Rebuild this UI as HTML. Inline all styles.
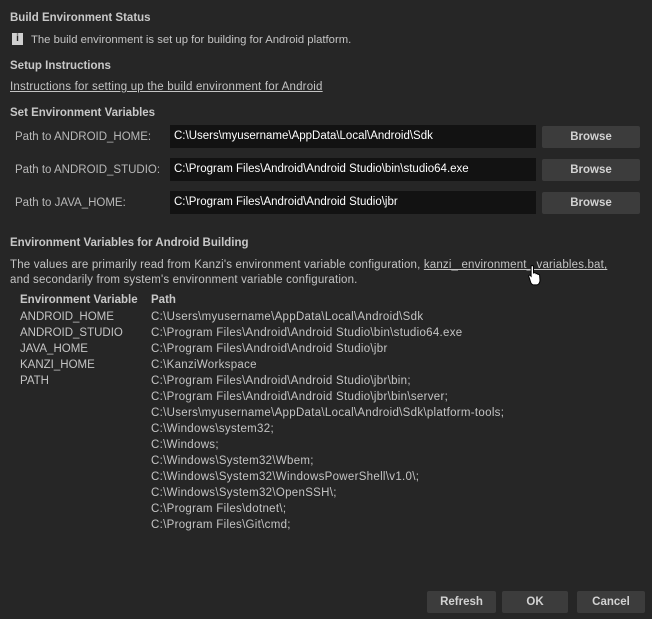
<!DOCTYPE html>
<html><head><meta charset="utf-8"><style>
body{margin:0;width:652px;height:619px;background:#262626;font-family:"Liberation Sans",sans-serif;font-size:11.5px;color:#c4c4c4;position:relative;overflow:hidden}
.a{position:absolute;white-space:nowrap;line-height:14px}
.h{font-weight:bold;color:#c8c8c8}
.u{text-decoration:underline}
.in{position:absolute;left:170px;width:366px;height:23px;background:#121212;color:#fff;line-height:22px;padding-left:4px;box-sizing:border-box;white-space:nowrap}
.b{position:absolute;background:#3c3c3c;color:#d2d2d2;font-weight:bold;text-align:center;border-radius:2px;line-height:22px;height:22px}
.lab{position:absolute;left:15px;color:#b8b8b8;line-height:14px}
</style></head><body>
<div class="a h" style="left:10px;top:11px">Build Environment Status</div>
<div class="a" style="left:12px;top:33px;width:11px;height:12px;background:#d0d0d0;color:#262626;font-weight:bold;text-align:center;line-height:12px;font-size:10px">i</div>
<div class="a" style="left:31px;top:33px;font-size:11.3px">The build environment is set up for building for Android platform.</div>
<div class="a h" style="left:10px;top:59px">Setup Instructions</div>
<div class="a u" style="left:10px;top:80px;letter-spacing:0.2px">Instructions for setting up the build environment for Android</div>
<div class="a h" style="left:10px;top:106px">Set Environment Variables</div>
<div class="lab" style="top:130px">Path to ANDROID_HOME:</div>
<div class="in" style="top:125px">C:\Users\myusername\AppData\Local\Android\Sdk</div>
<div class="b" style="left:542px;top:126px;width:98px">Browse</div>
<div class="lab" style="top:163px">Path to ANDROID_STUDIO:</div>
<div class="in" style="top:158px">C:\Program Files\Android\Android Studio\bin\studio64.exe</div>
<div class="b" style="left:542px;top:159px;width:98px">Browse</div>
<div class="lab" style="top:196px">Path to JAVA_HOME:</div>
<div class="in" style="top:191px">C:\Program Files\Android\Android Studio\jbr</div>
<div class="b" style="left:542px;top:192px;width:98px">Browse</div>
<div class="a h" style="left:10px;top:236px">Environment Variables for Android Building</div>
<div class="a" style="left:10px;top:258px;letter-spacing:0.17px">The values are primarily read from Kanzi's environment variable configuration, <span class="u">kanzi_ environment_ variables.bat,</span></div>
<div class="a" style="left:10px;top:273px;letter-spacing:0.17px">and secondarily from system's environment variable configuration.</div>
<div class="a h" style="left:20px;top:293px;font-weight:bold">Environment Variable</div>
<div class="a h" style="left:151px;top:293px">Path</div>
<div class="a" style="left:20px;top:309px;line-height:16px">ANDROID_HOME<br>ANDROID_STUDIO<br>JAVA_HOME<br>KANZI_HOME<br>PATH</div>
<div class="a" style="left:151px;top:309px;line-height:16px;letter-spacing:0.3px">C:\Users\myusername\AppData\Local\Android\Sdk<br>C:\Program Files\Android\Android Studio\bin\studio64.exe<br>C:\Program Files\Android\Android Studio\jbr<br>C:\KanziWorkspace<br>C:\Program Files\Android\Android Studio\jbr\bin;<br>C:\Program Files\Android\Android Studio\jbr\bin\server;<br>C:\Users\myusername\AppData\Local\Android\Sdk\platform-tools;<br>C:\Windows\system32;<br>C:\Windows;<br>C:\Windows\System32\Wbem;<br>C:\Windows\System32\WindowsPowerShell\v1.0\;<br>C:\Windows\System32\OpenSSH\;<br>C:\Program Files\dotnet\;<br>C:\Program Files\Git\cmd;</div>
<svg style="position:absolute;left:528px;top:264px" width="16" height="22" viewBox="0 0 16 22"><path d="M4 1.5c1 0 1.5.6 1.5 1.5v6l1-.2c.8-.2 1.5.3 1.6.9.8-.3 1.6 0 1.8.7.8-.2 1.6.2 1.7 1l.4 5c0 2-1.2 4-3 4.5H6c-1.5 0-2.5-1-3.2-2.2L.8 12.5c-.4-.8.4-1.6 1.3-1.2l1 1V3c0-.9.4-1.5.9-1.5z" fill="#fff" stroke="#000" stroke-width="1"/></svg>
<div class="b" style="left:427px;top:591px;width:69px">Refresh</div>
<div class="b" style="left:502px;top:591px;width:66px">OK</div>
<div class="b" style="left:577px;top:591px;width:68px">Cancel</div>
</body></html>
